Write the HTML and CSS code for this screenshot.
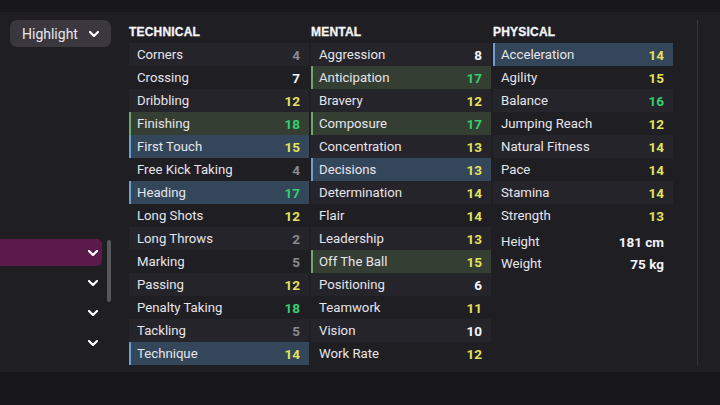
FILE: index.html
```html
<!DOCTYPE html>
<html>
<head>
<meta charset="utf-8">
<link rel="stylesheet" href="styles.css">
</head>
<body>
<div class="topbar"></div>
<div class="main">
  <aside class="side">
    <button class="hl-btn">Highlight <svg class="chev" viewBox="0 0 10 6"><path d="M1 1 L5 5 L9 1" /></svg></button>
    <div class="side-list">
      <div class="side-items">
        <div class="side-item active"><svg class="chev" viewBox="0 0 10 6"><path d="M1 1 L5 5 L9 1" /></svg></div>
        <div class="side-item"><svg class="chev" viewBox="0 0 10 6"><path d="M1 1 L5 5 L9 1" /></svg></div>
        <div class="side-item"><svg class="chev" viewBox="0 0 10 6"><path d="M1 1 L5 5 L9 1" /></svg></div>
        <div class="side-item"><svg class="chev" viewBox="0 0 10 6"><path d="M1 1 L5 5 L9 1" /></svg></div>
      </div>
      <div class="scroll"></div>
    </div>
  </aside>
  <section class="cols">
    <div class="col">
      <h3>Technical</h3>
      <div class="row alt"><span>Corners</span><b class="grey">4</b></div>
      <div class="row"><span>Crossing</span><b class="white">7</b></div>
      <div class="row alt"><span>Dribbling</span><b class="yellow">12</b></div>
      <div class="row green"><span>Finishing</span><b class="greenv">18</b></div>
      <div class="row blue"><span>First Touch</span><b class="yellow">15</b></div>
      <div class="row"><span>Free Kick Taking</span><b class="grey">4</b></div>
      <div class="row blue"><span>Heading</span><b class="greenv">17</b></div>
      <div class="row"><span>Long Shots</span><b class="yellow">12</b></div>
      <div class="row alt"><span>Long Throws</span><b class="grey">2</b></div>
      <div class="row"><span>Marking</span><b class="grey">5</b></div>
      <div class="row alt"><span>Passing</span><b class="yellow">12</b></div>
      <div class="row"><span>Penalty Taking</span><b class="greenv">18</b></div>
      <div class="row alt"><span>Tackling</span><b class="grey">5</b></div>
      <div class="row blue"><span>Technique</span><b class="yellow">14</b></div>
    </div>
    <div class="col">
      <h3>Mental</h3>
      <div class="row alt"><span>Aggression</span><b class="white">8</b></div>
      <div class="row green"><span>Anticipation</span><b class="greenv">17</b></div>
      <div class="row alt"><span>Bravery</span><b class="yellow">12</b></div>
      <div class="row green"><span>Composure</span><b class="greenv">17</b></div>
      <div class="row alt"><span>Concentration</span><b class="yellow">13</b></div>
      <div class="row blue"><span>Decisions</span><b class="yellow">13</b></div>
      <div class="row alt"><span>Determination</span><b class="yellow">14</b></div>
      <div class="row"><span>Flair</span><b class="yellow">14</b></div>
      <div class="row alt"><span>Leadership</span><b class="yellow">13</b></div>
      <div class="row green"><span>Off The Ball</span><b class="yellow">15</b></div>
      <div class="row alt"><span>Positioning</span><b class="white">6</b></div>
      <div class="row"><span>Teamwork</span><b class="yellow">11</b></div>
      <div class="row alt"><span>Vision</span><b class="white">10</b></div>
      <div class="row"><span>Work Rate</span><b class="yellow">12</b></div>
    </div>
    <div class="col">
      <h3>Physical</h3>
      <div class="row blue"><span>Acceleration</span><b class="yellow">14</b></div>
      <div class="row"><span>Agility</span><b class="yellow">15</b></div>
      <div class="row alt"><span>Balance</span><b class="greenv">16</b></div>
      <div class="row"><span>Jumping Reach</span><b class="yellow">12</b></div>
      <div class="row alt"><span>Natural Fitness</span><b class="yellow">14</b></div>
      <div class="row"><span>Pace</span><b class="yellow">14</b></div>
      <div class="row alt"><span>Stamina</span><b class="yellow">14</b></div>
      <div class="row"><span>Strength</span><b class="yellow">13</b></div>
      <div class="info">
        <div class="row plain"><span>Height</span><b class="white">181 cm</b></div>
        <div class="row plain"><span>Weight</span><b class="white">75 kg</b></div>
      </div>
    </div>
  </section>
  <div class="divider"></div>
</div>
<div class="bottombar"></div>
</body>
</html>
```
FILE: styles.css
```css
* { box-sizing: border-box; }
html, body { margin: 0; padding: 0; }
body {
  width: 720px;
  height: 405px;
  overflow: hidden;
  background: #1f1e23;
  font-family: Roboto, "Noto Sans", sans-serif;
  color: #e4e3e8;
  display: flex;
  flex-direction: column;
}
.topbar { height: 12px; background: #18171c; flex: none; }
.bottombar { flex: 1; background: #17161b; }
.main {
  height: 360px;
  flex: none;
  display: flex;
  padding-top: 8px;
}
.side {
  width: 112px;
  flex: none;
  display: flex;
  flex-direction: column;
}
.hl-btn {
  margin-left: 10px;
  width: 101px;
  height: 27px;
  border: none;
  border-radius: 7px;
  background: #3a383e;
  color: #e8e7ec;
  font-family: Roboto, "Noto Sans", sans-serif;
  font-size: 14px;
  display: flex;
  align-items: center;
  justify-content: space-between;
  padding: 0 12px 0 12px;
}
.hl-btn .chev { width: 10px; height: 6px; }
.chev path { fill: none; stroke: #ffffff; stroke-width: 2.2; stroke-linecap: round; stroke-linejoin: round; }
.side-list {
  margin-top: 192px;
  display: flex;
}
.side-items { width: 102px; display: flex; flex-direction: column; gap: 3px; }
.side-item {
  height: 27px;
  display: flex;
  align-items: center;
  justify-content: flex-end;
  padding-right: 4px;
}
.side-item .chev { width: 10px; height: 6px; }
.side-item.active {
  background: #5a1b4a;
  border-radius: 0 5px 5px 0;
}
.scroll {
  margin-left: 5px;
  margin-top: 1px;
  width: 4px;
  height: 62px;
  border-radius: 2px;
  background: #58575c;
}
.cols {
  margin-left: 17px;
  display: grid;
  grid-template-columns: 180px 180px 180px;
  column-gap: 2px;
  align-items: start;
}
.col h3 {
  margin: 0;
  height: 23px;
  line-height: 24px;
  font-family: "Liberation Sans", Arial, sans-serif;
  font-weight: 700;
  font-size: 12px;
  text-transform: uppercase;
  color: #f4f4f7;
  letter-spacing: 0.2px;
  -webkit-text-stroke: 0.3px #f4f4f7;
}
.row {
  height: 23px;
  display: flex;
  align-items: center;
  justify-content: space-between;
  padding: 0 9px 0 6px;
  font-size: 13.2px;
  line-height: 22px;
  border-left: 2px solid transparent;
}
.row span { color: #e6e5ea; }
.row.alt { background: #25242a; }
.row.green { background: #353e33; border-left-color: #6ea66d; }
.row.blue { background: #34465a; border-left-color: #6b9fcf; }
.row b { font-weight: 700; font-size: 13.5px; }
.grey { color: #8b8a90; }
.white { color: #f3f3f6; }
.yellow { color: #e4e15c; }
.greenv { color: #33d070; }
.info { margin-top: 4px; }
.row.plain { height: 22px; }
.divider {
  margin-left: 24px;
  width: 1px;
  height: 345px;
  background: #36353b;
}
```
